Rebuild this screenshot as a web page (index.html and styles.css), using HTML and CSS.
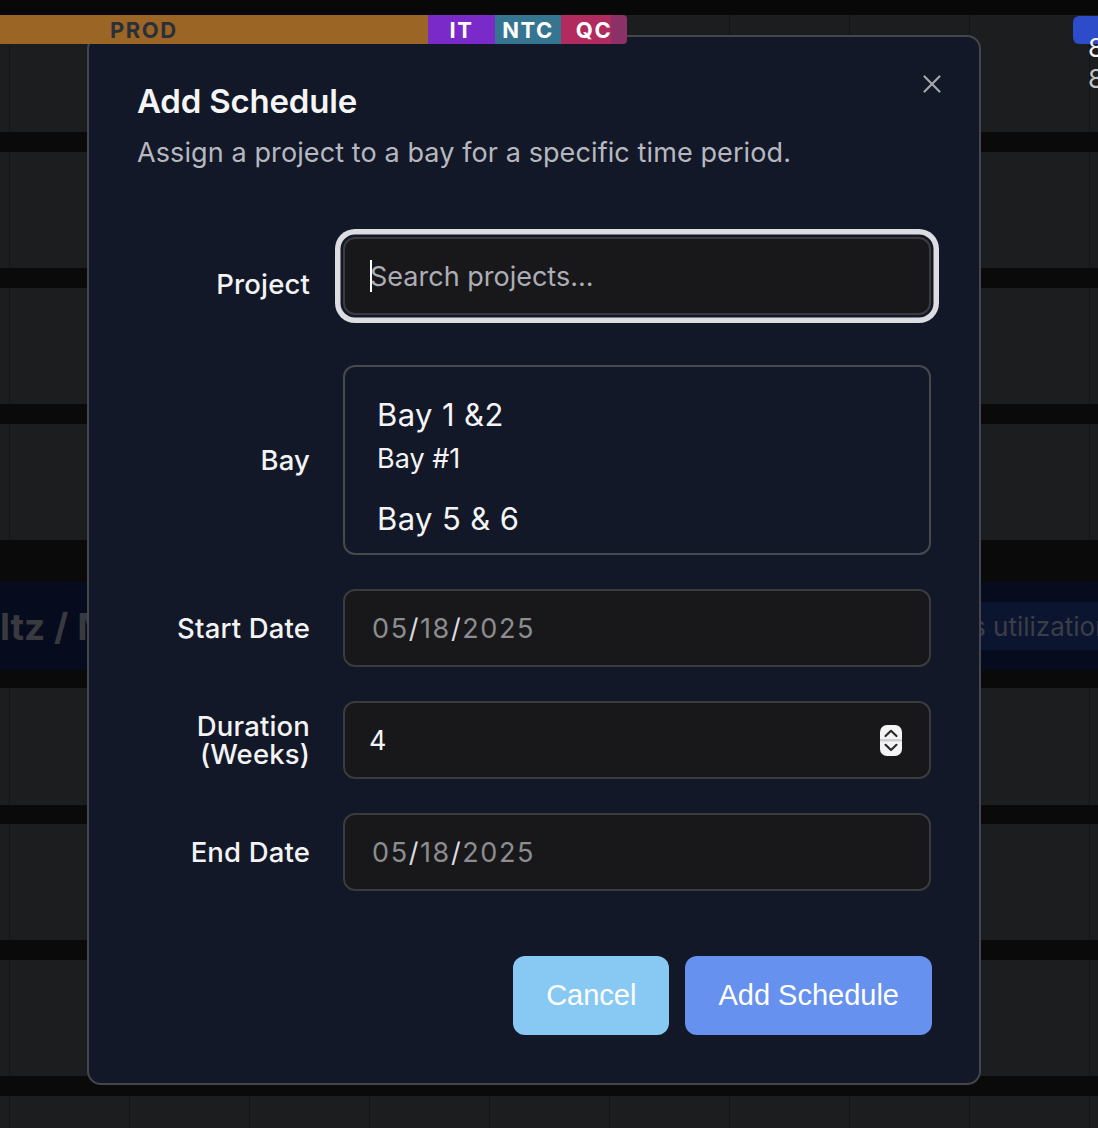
FILE: index.html
```html
<!DOCTYPE html>
<html lang="en">
<head>
<meta charset="utf-8">
<title>Add Schedule</title>
<link rel="stylesheet" href="styles.css">
</head>
<body>
<div class="page">
  <div class="strip"></div>
  <div class="cells h117 first">
    <div class="timeline">
      <div class="seg prod">PROD</div>
      <div class="seg it">IT</div>
      <div class="seg ntc">NTC</div>
      <div class="seg qc">QC</div>
      <div class="spacer"></div>
      <div class="badge"></div>
    </div>
    <div class="nums"><span class="n1">8</span><span class="n2">8</span></div>
  </div>
  <div class="gap"></div>
  <div class="cells h116"></div>
  <div class="gap"></div>
  <div class="cells h116"></div>
  <div class="gap"></div>
  <div class="cells h116"></div>
  <div class="gap g42"></div>
  <div class="band">
    <div class="band-left">ltz / Ma</div>
    <div class="band-right">s utilization</div>
  </div>
  <div class="gap g18"></div>
  <div class="cells h117"></div>
  <div class="gap g19"></div>
  <div class="cells h116"></div>
  <div class="gap"></div>
  <div class="cells h116"></div>
  <div class="gap"></div>
  <div class="cells rest"></div>
</div>

<div class="modal">
  <button class="close" aria-label="Close">
    <svg width="20" height="20" viewBox="0 0 20 20"><path d="M2.5 2.5 L17.5 17.5 M17.5 2.5 L2.5 17.5" stroke="#a6a7ad" stroke-width="2.2" stroke-linecap="round" fill="none"/></svg>
  </button>
  <h2 class="title">Add Schedule</h2>
  <p class="subtitle">Assign a project to a bay for a specific time period.</p>

  <div class="form">
    <div class="label">Project</div>
    <div class="field focus project"><span class="caret"></span><span class="placeholder">Search projects...</span></div>

    <div class="label">Bay</div>
    <div class="baylist">
      <div class="opt-lg">Bay 1 &amp;2</div>
      <div class="opt-sm">Bay #1</div>
      <div class="opt-lg second">Bay 5 &amp; 6</div>
    </div>

    <div class="label">Start Date</div>
    <div class="field date"><span class="d">05</span><span class="sl">/</span><span class="d">18</span><span class="sl">/</span><span class="d">2025</span></div>

    <div class="label two">Duration<br>(Weeks)</div>
    <div class="field num"><span class="val">4</span>
      <svg class="spin" width="22" height="31" viewBox="0 0 22 31">
        <rect x="0" y="0" width="22" height="31" rx="7" fill="#f4f4f5"/>
        <rect x="0" y="14" width="22" height="2.5" fill="#cfcfd3"/>
        <path d="M5.5 11 L11 5.8 L16.5 11" stroke="#2a2a2e" stroke-width="2.2" fill="none" stroke-linecap="round" stroke-linejoin="round"/>
        <path d="M5.5 19.8 L11 25 L16.5 19.8" stroke="#2a2a2e" stroke-width="2.2" fill="none" stroke-linecap="round" stroke-linejoin="round"/>
      </svg>
    </div>

    <div class="label">End Date</div>
    <div class="field date"><span class="d">05</span><span class="sl">/</span><span class="d">18</span><span class="sl">/</span><span class="d">2025</span></div>
  </div>

  <div class="actions">
    <button class="btn cancel">Cancel</button>
    <button class="btn primary">Add Schedule</button>
  </div>
</div>
</body>
</html>
```

FILE: styles.css
```css
html, body {
  margin: 0;
  padding: 0;
  height: 1128px;
  overflow: hidden;
  background: #0a0a0a;
}

body {
  font-family: Inter, "Noto Sans", sans-serif;
  position: relative;
}

.page {
  display: flex;
  flex-direction: column;
  height: 1128px;
}

.strip {
  height: 15px;
  background: #080808;
  flex: none;
}

.cells {
  flex: none;
  background-color: #1c1d1f;
  background-image: linear-gradient(to right, #151517 1px, transparent 1px);
  background-size: 120px 100%;
  background-position: 9px 0;
}

.h117 { height: 117px; }
.h116 { height: 116px; }
.rest { flex: 1; }

.gap {
  flex: none;
  height: 20px;
  background: #0a0a0a;
}
.g42 { height: 42px; }
.g18 { height: 18px; }
.g19 { height: 19px; }

.first {
  display: flex;
  flex-direction: column;
}

.timeline {
  display: flex;
  height: 29px;
  position: relative;
  z-index: 5;
}

.seg {
  display: flex;
  align-items: center;
  height: 29px;
  font-weight: 700;
  font-size: 22px;
  letter-spacing: 1.5px;
  color: #fff;
  box-sizing: border-box;
}

.prod {
  width: 428px;
  padding-left: 110px;
  background: #9b6625;
  color: #2a2f3a;
}

.it {
  width: 67px;
  justify-content: center;
  background: #7a2ac8;
}

.ntc {
  width: 66px;
  justify-content: center;
  background: #367590;
}

.qc {
  width: 66px;
  justify-content: center;
  background: linear-gradient(to right, #b12b5f 0 50px, #8b3168 50px 66px);
  border-radius: 0 4px 4px 0;
}

.spacer { flex: 1; }

.badge {
  width: 25px;
  height: 28px;
  margin-top: 1px;
  background: #2d4cca;
  border-radius: 6px 0 0 6px;
}

.nums {
  align-self: flex-end;
  width: 10px;
  margin-top: -12px;
  display: flex;
  flex-direction: column;
  font-size: 26px;
  line-height: 31px;
  white-space: nowrap;
  position: relative;
  z-index: 6;
}
.n1 { color: #f2f2f2; }
.n2 { color: #c4c4c6; }

.band {
  flex: none;
  height: 88px;
  background: #070b1e;
  display: flex;
  align-items: center;
  overflow: hidden;
}

.band-left {
  width: 87px;
  overflow: hidden;
  white-space: nowrap;
  font-weight: 700;
  font-size: 37px;
  color: #393a3f;
}

.band-right {
  margin-left: auto;
  width: 220px;
  height: 48px;
  box-sizing: border-box;
  padding-left: 94px;
  background: #0b1530;
  display: flex;
  align-items: center;
  white-space: nowrap;
  overflow: hidden;
  font-size: 26px;
  color: #3c3e47;
}

/* Modal */
.modal {
  position: absolute;
  z-index: 2;
  left: 87px;
  top: 35px;
  width: 894px;
  height: 1050px;
  box-sizing: border-box;
  border: 2px solid #45464b;
  border-radius: 14px;
  background: #121827;
  padding: 44px 48px 48px;
}

.close {
  position: absolute;
  right: 37px;
  top: 37px;
  width: 20px;
  height: 20px;
  padding: 0;
  border: 0;
  background: none;
  display: block;
}
.close svg { display: block; }

.title {
  margin: 0;
  font-weight: 600;
  font-size: 33px;
  line-height: 40px;
  color: #f5f5f6;
  letter-spacing: -0.2px;
}

.subtitle {
  margin: 13.5px 0 0;
  font-weight: 400;
  font-size: 27px;
  line-height: 36px;
  letter-spacing: 0.1px;
  color: #b7b8bf;
}

.form {
  margin-top: 66.5px;
  display: grid;
  grid-template-columns: 173px 588px;
  column-gap: 33px;
  row-gap: 34px;
  align-items: center;
}

.label {
  text-align: right;
  font-weight: 500;
  font-size: 27.5px;
  line-height: 32px;
  letter-spacing: 0.15px;
  color: #f3f3f4;
}
.label.two { line-height: 28.5px; }

.field {
  height: 78px;
  box-sizing: border-box;
  border: 2px solid #3a3a3f;
  border-radius: 12px;
  background: #18181b;
  display: flex;
  align-items: center;
  padding-left: 25px;
  font-size: 27px;
  color: #f4f4f5;
}

.field.focus {
  box-shadow: 0 0 0 2.5px #121827, 0 0 0 8px #dcdce1;
}

.project { margin-bottom: 16px; }

.caret {
  display: inline-block;
  width: 2px;
  height: 32px;
  background: #ffffff;
  margin-right: -2px;
  position: relative;
  z-index: 1;
}

.placeholder { color: #adadb5; }

.date { padding-left: 27px; letter-spacing: 1.6px; }
.d { color: #8c8c91; }
.sl { color: #dcdce0; }

.num { padding-left: 24px; padding-right: 27px; }
.spin { margin-left: auto; display: block; }

.baylist {
  height: 190px;
  box-sizing: border-box;
  border: 2px solid #48484e;
  border-radius: 12px;
  padding: 28px 31px 0 32px;
  color: #f4f4f5;
}

.opt-lg {
  font-size: 31px;
  line-height: 40px;
  letter-spacing: 0.4px;
}
.opt-sm {
  font-size: 27px;
  line-height: 36px;
  margin-top: 5.7px;
}
.opt-lg.second { margin-top: 22.5px; }

.actions {
  margin-top: 65px;
  display: flex;
  justify-content: flex-end;
  gap: 16px;
  margin-right: -1px;
}

.btn {
  height: 79px;
  padding: 0 33px;
  border: 0;
  border-radius: 12px;
  font-family: "Liberation Sans", Arial, sans-serif;
  font-size: 29px;
  color: #ffffff;
}
.cancel { background: #87c9f3; }
.primary { background: #6691ee; }
```
